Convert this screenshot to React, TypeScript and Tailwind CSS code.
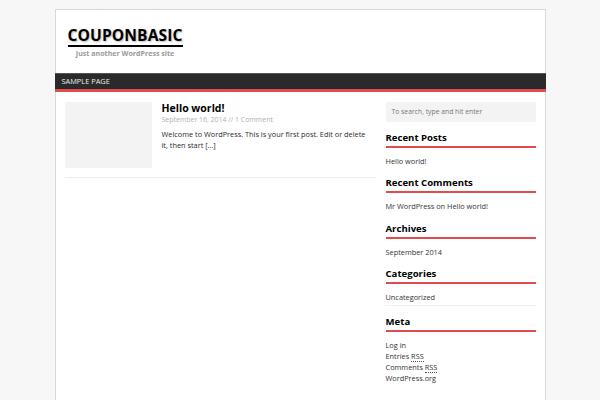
import React from "react";

const font = { fontFamily: '"Open Sans", "DejaVu Sans", sans-serif' };

function Widget({ title, children, className = "" }: { title: string; children: React.ReactNode; className?: string }) {
  return (
    <div className={className}>
      <div className="h-[18px] border-b-2 border-[#e24b4b] text-[9.6px] font-bold leading-[16px] text-black">{title}</div>
      {children}
    </div>
  );
}

export default function App() {
  return (
    <div className="min-h-[400px] w-[600px] bg-[#f7f7f7] pt-[9px]" style={font}>
      <div className="mx-auto h-[391px] w-[491px] border-x border-t border-[#d8d8d8] bg-white">
        {/* header */}
        <div className="h-[63px] pl-[12px] pt-[13px]">
          <div className="inline-flex flex-col items-center">
            <div className="border-b-2 border-black text-[15.6px] font-bold leading-[20px] tracking-[0.1px] text-black [text-shadow:1px_1px_2px_#bbb]">
              COUPONBASIC
            </div>
            <div className="mt-[2px] text-[7.1px] font-bold leading-[9px] text-[#9a9a9a]">Just another WordPress site</div>
          </div>
        </div>
        {/* nav */}
        <div className="-mx-px flex h-[19px] items-center border-t border-[#555] border-b-[3px] border-b-[#e24b4b] bg-[#2a2a2a] pl-[7px]">
          <span className="text-[7.4px] leading-[15px] text-[#eeeeee]">SAMPLE PAGE</span>
        </div>
        {/* content */}
        <div className="flex gap-[10px] px-[9px] pt-[10px]">
          <div className="w-[311px]">
            <div className="flex gap-[10px] border-b border-[#eeeeee] pb-[9px]">
              <div className="h-[66px] w-[87px] shrink-0 bg-[#f3f3f3]" />
              <div className="-mt-[1px] w-[208px]">
                <div className="text-[10.5px] font-bold leading-[14px] text-black">Hello world!</div>
                <div className="text-[6.95px] leading-[10px] text-[#b0b0b0]">September 16, 2014 // 1 Comment</div>
                <div className="mt-[3.5px] text-[7.35px] leading-[11.5px] text-[#2a2a2a]">
                  Welcome to WordPress. This is your first post. Edit or delete it, then start […]
                </div>
              </div>
            </div>
          </div>
          <div className="w-[150px] text-[7.35px] text-[#333]">
            <div className="flex h-[20px] items-center bg-[#f3f3f3] pl-[6px] text-[6.8px] text-[#777]">
              To search, type and hit enter
            </div>
            <Widget title="Recent Posts" className="mt-[8px]">
              <div className="mt-[7px] leading-[12px]">Hello world!</div>
            </Widget>
            <Widget title="Recent Comments" className="mt-[8px]">
              <div className="mt-[7px] leading-[12px]">Mr WordPress on Hello world!</div>
            </Widget>
            <Widget title="Archives" className="mt-[9px]">
              <div className="mt-[7px] leading-[12px]">September 2014</div>
            </Widget>
            <Widget title="Categories" className="mt-[8px]">
              <div className="mt-[7px] border-b border-[#f0f0f0] pb-[2px] leading-[12px]">Uncategorized</div>
            </Widget>
            <Widget title="Meta" className="mt-[7.5px]">
              <div className="mt-[8.5px] leading-[11px]">
                <div>Log in</div>
                <div>
                  Entries <abbr className="border-b border-dotted border-[#555] no-underline">RSS</abbr>
                </div>
                <div>
                  Comments <abbr className="border-b border-dotted border-[#555] no-underline">RSS</abbr>
                </div>
                <div>WordPress.org</div>
              </div>
            </Widget>
          </div>
        </div>
      </div>
    </div>
  );
}
